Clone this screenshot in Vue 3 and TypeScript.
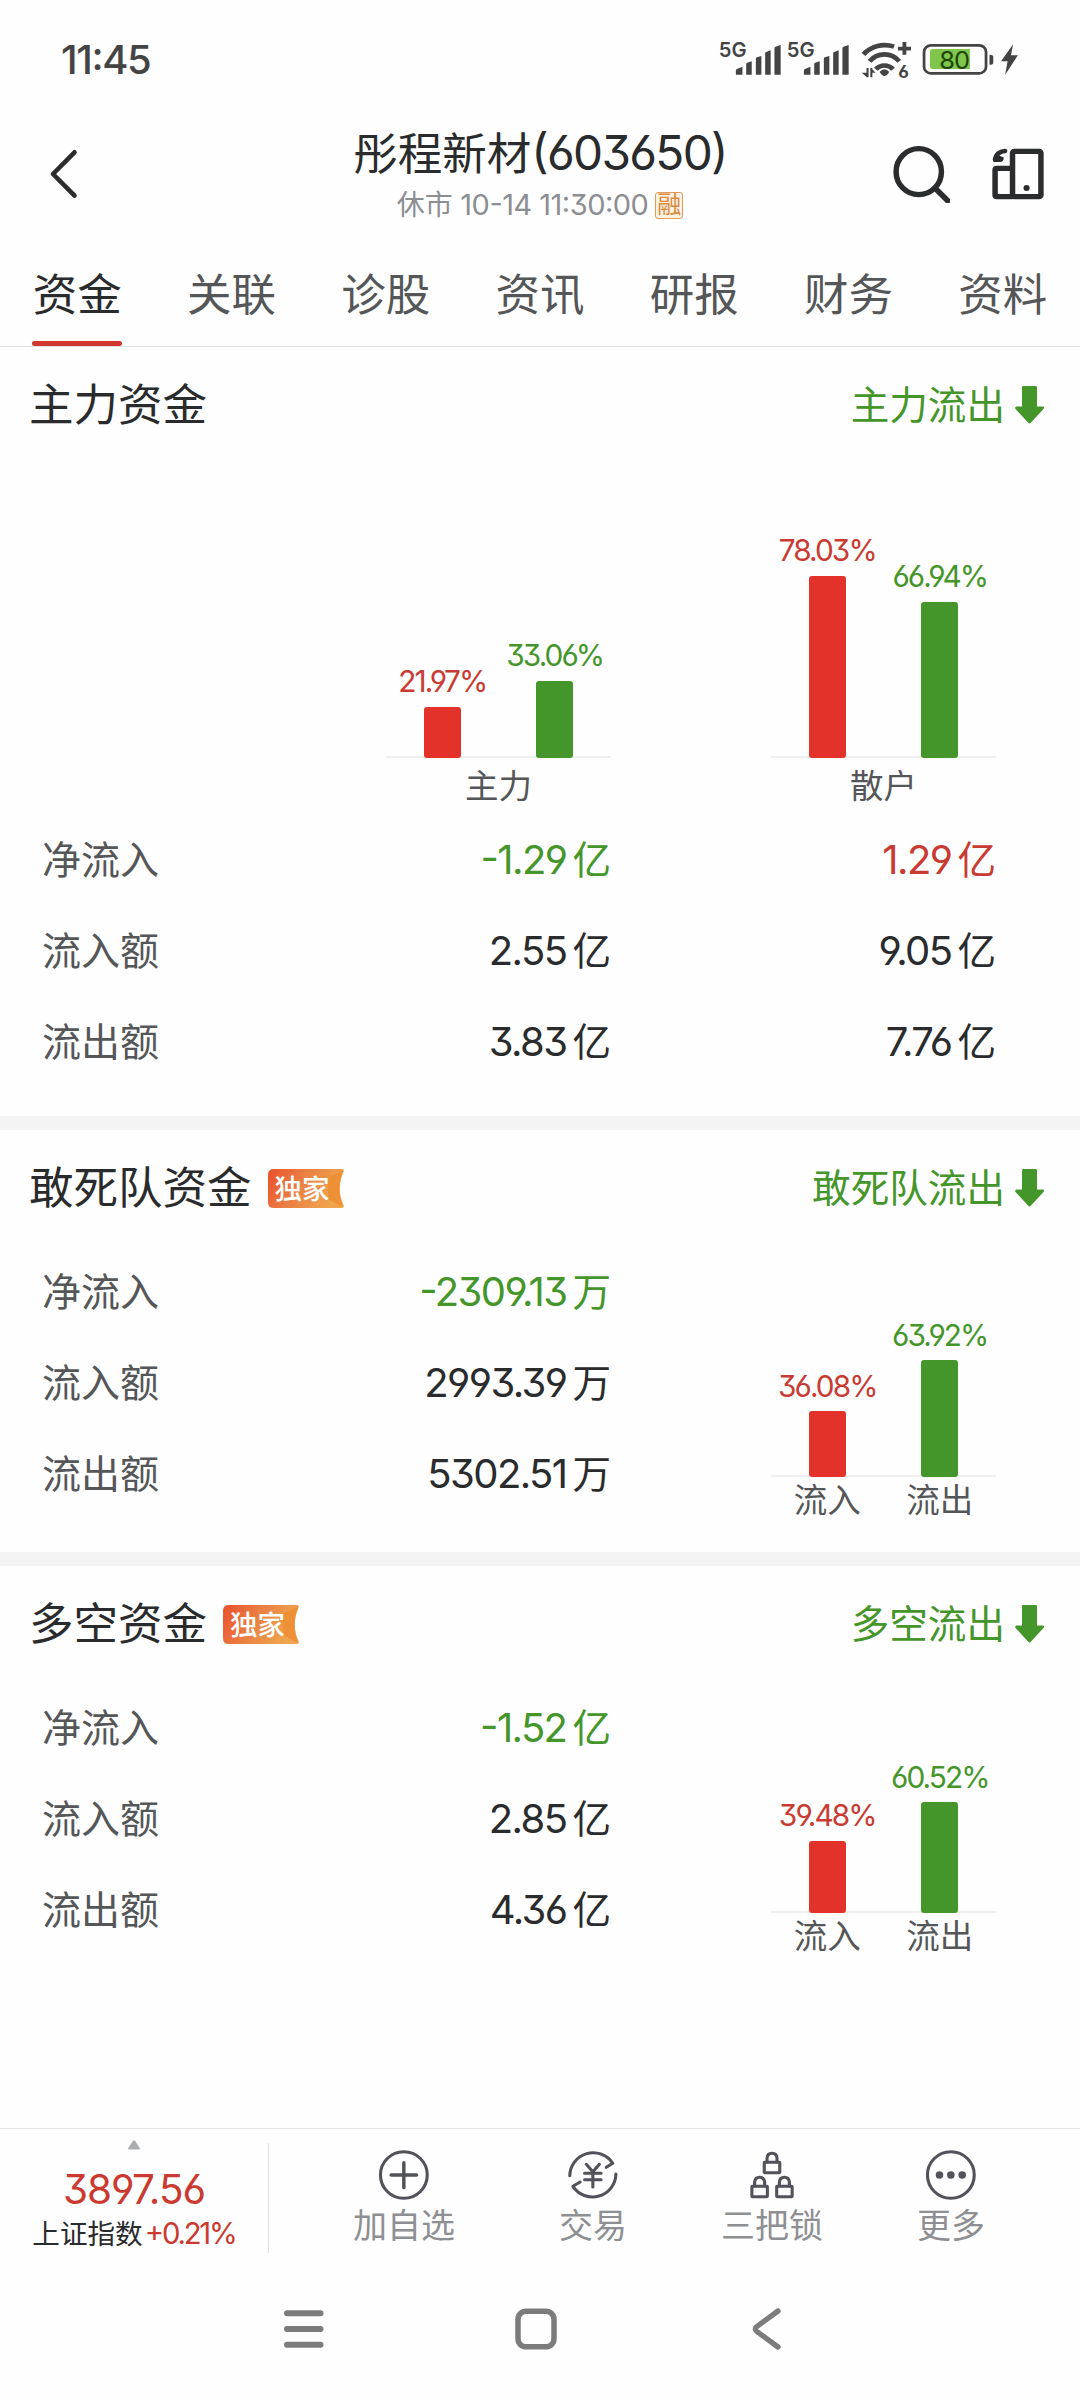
<script setup lang="ts">
interface Amount {
  num: string
  unit: string
  tone?: 'up' | 'down'
}
interface Row {
  label: string
  amounts: Amount[]
}
interface Bar {
  value: number
  tone: 'up' | 'down'
  label?: string
}

const tabs: string[] = ['资金', '关联', '诊股', '资讯', '研报', '财务', '资料']

const mainBars: { name: string; bars: Bar[] }[] = [
  { name: '主力', bars: [{ value: 21.97, tone: 'up' }, { value: 33.06, tone: 'down' }] },
  { name: '散户', bars: [{ value: 78.03, tone: 'up' }, { value: 66.94, tone: 'down' }] },
]

const mainRows: Row[] = [
  { label: '净流入', amounts: [{ num: '-1.29', unit: '亿', tone: 'down' }, { num: '1.29', unit: '亿', tone: 'up' }] },
  { label: '流入额', amounts: [{ num: '2.55', unit: '亿' }, { num: '9.05', unit: '亿' }] },
  { label: '流出额', amounts: [{ num: '3.83', unit: '亿' }, { num: '7.76', unit: '亿' }] },
]

const panels: { title: string; trend: string; rows: Row[]; bars: Bar[] }[] = [
  {
    title: '敢死队资金',
    trend: '敢死队流出',
    rows: [
      { label: '净流入', amounts: [{ num: '-2309.13', unit: '万', tone: 'down' }] },
      { label: '流入额', amounts: [{ num: '2993.39', unit: '万' }] },
      { label: '流出额', amounts: [{ num: '5302.51', unit: '万' }] },
    ],
    bars: [{ value: 36.08, tone: 'up', label: '流入' }, { value: 63.92, tone: 'down', label: '流出' }],
  },
  {
    title: '多空资金',
    trend: '多空流出',
    rows: [
      { label: '净流入', amounts: [{ num: '-1.52', unit: '亿', tone: 'down' }] },
      { label: '流入额', amounts: [{ num: '2.85', unit: '亿' }] },
      { label: '流出额', amounts: [{ num: '4.36', unit: '亿' }] },
    ],
    bars: [{ value: 39.48, tone: 'up', label: '流入' }, { value: 60.52, tone: 'down', label: '流出' }],
  },
]

const barHeight = (value: number, scale: number): string => `${(value * scale).toFixed(1)}px`
</script>

<template>
  <div class="screen">
    <div class="status">
      <span class="clock">11:45</span>
      <div class="status-icons">
        <svg v-for="n in 2" :key="n" class="signal" viewBox="0 0 180 116" preserveAspectRatio="none">
          <text x="-1" y="50" class="net" textLength="81" lengthAdjust="spacingAndGlyphs">5G</text>
          <path d="M49 104V92Q49 89 52 87L68 80V104ZM79 104V72Q79 69 82 68L95 64V104ZM107 104V56Q107 53 110 52L123 48V104ZM134 104V40Q134 37 137 36L150 31V104ZM161 104V24Q161 21 164 20L179 15V104Z" />
        </svg>
        <svg class="wifi" viewBox="0 0 148 116" preserveAspectRatio="none">
          <g fill="none" stroke="#444" stroke-width="14">
            <path d="M7 43A82 82 0 0 1 96 20" />
            <path d="M25 64A55 55 0 0 1 111 64" />
            <path d="M43 88A33 33 0 0 1 93 88" />
            <path d="M126 6V44M107 26H145" stroke-width="11" />
          </g>
          <path d="M54 95Q68 80 82 95Q68 121 54 95Z" />
          <path d="M16 84H22V112H17L2 98H16ZM27 84H33V112H27ZM33 88L42 98H33Z" />
          <text x="108" y="113" class="wifi-gen">6</text>
        </svg>
        <svg class="battery" viewBox="0 0 210 116" preserveAspectRatio="none">
          <rect x="6" y="16" width="180" height="84" rx="20" fill="none" stroke="#444" stroke-width="8" />
          <path d="M31 27H139V87H31Q23 87 23 79V35Q23 27 31 27Z" fill="#80c64c" />
          <path d="M196 44Q207 44 207 50V68Q207 74 196 74Z" />
          <text x="50" y="87" class="battery-level" textLength="90">80</text>
        </svg>
        <svg class="bolt" viewBox="0 0 54 116" preserveAspectRatio="none">
          <path d="M38 13L3 64H22L15 104L52 46H32Z" />
        </svg>
      </div>
    </div>

    <header class="header">
      <svg class="back" viewBox="0 0 30 52" fill="none" stroke="#2b2c2e" stroke-width="4.600" stroke-linecap="round" stroke-linejoin="round">
        <path d="M25.500 4.300L4 26L25.500 47.700" />
      </svg>
      <div class="heading">
        <div class="stock"><span class="stock-name">彤程新材</span><span>(603650)</span></div>
        <div class="session">
          <span><span class="session-cjk">休市</span> 10-14 11:30:00</span>
          <span class="margin-tag">融</span>
        </div>
      </div>
      <div class="header-actions">
        <svg class="search" viewBox="0 0 166 172" preserveAspectRatio="none" fill="none" stroke="#2b2c2e" stroke-width="16" stroke-linecap="round">
          <ellipse cx="75" cy="77" rx="66" ry="69" />
          <path d="M124 128L159 164" stroke-width="17" />
        </svg>
        <svg class="layout" viewBox="0 0 152 156" preserveAspectRatio="none" fill="none" stroke="#2b2c2e" stroke-width="16" stroke-linejoin="round">
          <rect x="60" y="10" width="83" height="136" rx="5" />
          <path d="M60 61H14Q9 61 9 66V141Q9 146 14 146H60" />
          <circle cx="101" cy="120" r="9" fill="#2b2c2e" stroke="none" />
          <path d="M38 9Q13 11 9 35" stroke-linecap="round" stroke-width="14" />
          <path d="M4 28L21 23L34 28Q36 42 22 42H7Q2 42 4 28Z" fill="#2b2c2e" stroke="none" />
        </svg>
      </div>
    </header>

    <nav class="tabs">
      <div v-for="(tab, i) in tabs" :key="tab" class="tab" :class="{ active: i === 0 }">
        <span>{{ tab }}</span>
      </div>
    </nav>

    <section class="main-panel">
      <div class="panel-head">
        <h2>主力资金</h2>
        <div class="trend">
          <span>主力流出</span>
          <svg viewBox="0 0 29 39" preserveAspectRatio="none"><path d="M8 0H20.500Q22 0 22 1.500V21H28Q30 21.500 28.500 23.500L16 37.500Q14.500 39.500 13 37.500L.5 23.500Q-.5 21.500 1.500 21H7V1.500Q7 0 8 0Z" /></svg>
        </div>
      </div>
      <div class="main-charts">
        <div v-for="group in mainBars" :key="group.name" class="chart">
          <div class="bars">
            <div v-for="bar in group.bars" :key="bar.tone" class="bar-col" :class="bar.tone">
              <span class="pct">{{ bar.value.toFixed(2) }}%</span>
              <i class="bar" :style="{ height: barHeight(bar.value, 2.335) }"></i>
            </div>
          </div>
          <div class="axis-name">{{ group.name }}</div>
        </div>
      </div>
      <div class="rows">
        <div v-for="row in mainRows" :key="row.label" class="row">
          <span class="row-label">{{ row.label }}</span>
          <span v-for="(a, i) in row.amounts" :key="i" class="amount" :class="a.tone">
            {{ a.num }}<em>{{ a.unit }}</em>
          </span>
        </div>
      </div>
    </section>

    <section v-for="panel in panels" :key="panel.title" class="panel">
      <div class="panel-head">
        <h2>{{ panel.title }}</h2>
        <div class="exclusive">
          <svg viewBox="0 0 76 40" preserveAspectRatio="none">
            <defs>
              <linearGradient id="ribbon" x1="0" y1="0" x2="1" y2=".3">
                <stop offset="0" stop-color="#e94f2d" />
                <stop offset=".5" stop-color="#ea8144" />
                <stop offset="1" stop-color="#efa54d" />
              </linearGradient>
            </defs>
            <path d="M6 0H74Q76.500 0 75.500 3Q68 20 75.500 37Q76.500 40 74 40H6Q0 40 0 34V6Q0 0 6 0Z" fill="url(#ribbon)" />
            <path d="M75 1L60 9V31L75 39Q68 20 75 1Z" fill="#ee9136" />
          </svg>
          <span>独家</span>
        </div>
        <div class="trend">
          <span>{{ panel.trend }}</span>
          <svg viewBox="0 0 29 39" preserveAspectRatio="none"><path d="M8 0H20.500Q22 0 22 1.500V21H28Q30 21.500 28.500 23.500L16 37.500Q14.500 39.500 13 37.500L.5 23.500Q-.5 21.500 1.500 21H7V1.500Q7 0 8 0Z" /></svg>
        </div>
      </div>
      <div class="panel-body">
        <div class="rows">
          <div v-for="row in panel.rows" :key="row.label" class="row">
            <span class="row-label">{{ row.label }}</span>
            <span v-for="(a, i) in row.amounts" :key="i" class="amount" :class="a.tone">
              {{ a.num }}<em>{{ a.unit }}</em>
            </span>
          </div>
        </div>
        <div class="chart">
          <div class="bars">
            <div v-for="bar in panel.bars" :key="bar.tone" class="bar-col" :class="bar.tone">
              <span class="pct">{{ bar.value.toFixed(2) }}%</span>
              <i class="bar" :style="{ height: barHeight(bar.value, 1.83) }"></i>
            </div>
          </div>
          <div class="axis-labels">
            <span v-for="bar in panel.bars" :key="bar.tone">{{ bar.label }}</span>
          </div>
        </div>
      </div>
    </section>

    <div class="filler"></div>

    <footer class="toolbar">
      <div class="index">
        <svg class="caret" viewBox="0 0 12 10"><path d="M5 .8Q6 -.5 7 .8L11.700 8Q12.200 9.500 11 9.500H1Q-.2 9.500 .3 8Z" fill="#aaacae" /></svg>
        <div class="index-value">3897.56</div>
        <div class="index-name"><span>上证指数</span><b>+0.21%</b></div>
      </div>
      <div class="actions">
        <div class="action">
          <svg viewBox="0 0 156 156" preserveAspectRatio="none">
            <ellipse cx="78" cy="78" rx="68" ry="70" />
            <path d="M78 41V116M41 78H115" stroke-width="10" />
          </svg>
          <span>加自选</span>
        </div>
        <div class="action">
          <svg viewBox="0 0 156 156" preserveAspectRatio="none">
            <path d="M11 80A68 70 0 0 1 136 43L117 55" />
            <path d="M145 75A68 70 0 0 1 20 112L41 99" />
            <path d="M59 46L78 68L97 46M78 68V114M54 73H102M54 92H102" />
          </svg>
          <span>交易</span>
        </div>
        <div class="action">
          <svg viewBox="0 0 156 156" preserveAspectRatio="none">
            <g v-for="p in [[51, 8], [15, 80], [87, 80]]" :key="p.join()" :transform="`translate(${p[0]} ${p[1]})`">
              <rect x="5" y="32" width="45" height="31" rx="1" />
              <path d="M13 31V20Q14 5 27.500 5T42 20V31" />
            </g>
          </svg>
          <span>三把锁</span>
        </div>
        <div class="action">
          <svg viewBox="0 0 156 156" preserveAspectRatio="none">
            <ellipse cx="78" cy="78" rx="68" ry="70" />
            <g fill="#52525a" stroke="none">
              <circle cx="45" cy="78" r="11" />
              <circle cx="78" cy="78" r="11" />
              <circle cx="111" cy="78" r="11" />
            </g>
          </svg>
          <span>更多</span>
        </div>
      </div>
    </footer>

    <div class="sysnav">
      <svg viewBox="0 0 44 46"><path d="M5 7.300H38.500M5 23H38.500M5 38.700H38.500" /></svg>
      <svg viewBox="0 0 44 46"><rect x="4" y="5.200" width="36" height="35.600" rx="8" stroke-width="5.500" /></svg>
      <svg viewBox="0 0 44 46"><path d="M32 5L10.700 20.700Q8 23 10.700 25.300L32 41" stroke-width="5.300" /></svg>
    </div>
  </div>
</template>

<style>
html,
body {
  background: #fefefe;
}
</style>

<style scoped>
.screen {
  width: 1080px;
  height: 2400px;
  display: flex;
  flex-direction: column;
  overflow: hidden;
  background: #fefefe;
  color: #2a2b2d;
  font-family: Inter, 'Noto Sans CJK SC', sans-serif;
  font-feature-settings: 'cv03', 'cv04', 'cv09', 'case', 'calt' 0;
}
svg {
  display: block;
  flex: none;
}
.status {
  height: 120px;
  flex: none;
  display: flex;
  justify-content: space-between;
  padding: 40px 61px 0 61px;
  box-sizing: border-box;
}
.clock {
  height: 40px;
  line-height: 40px;
  font-size: 40px;
  font-weight: 500;
  letter-spacing: -0.035em;
  color: #444;
}
.status-icons {
  display: flex;
}
.status-icons svg {
  height: 38.700px;
  fill: #444;
  overflow: visible;
}
.signal {
  width: 62px;
  margin-right: 6px;
}
.net {
  font-size: 62px;
  font-weight: 600;
}
.wifi {
  width: 51px;
  margin-left: 6px;
}
.wifi-gen {
  font-size: 50px;
  font-weight: 700;
}
.battery {
  width: 72.300px;
  margin-left: 10px;
}
.status-icons .battery-level {
  font-size: 74px;
  font-weight: 400;
  fill: #1d4508;
}
.bolt {
  width: 18.600px;
  margin-left: 6.500px;
}
.header {
  height: 126px;
  flex: none;
  display: flex;
  align-items: flex-start;
  justify-content: space-between;
}
.back {
  width: 30px;
  height: 52px;
  margin: 28px 171px 0 49px;
}
.heading {
  display: flex;
  flex-direction: column;
  align-items: center;
  flex: 1;
}
.stock {
  height: 60px;
  line-height: 60px;
  margin-top: 3px;
  font-size: 47.700px;
  letter-spacing: -0.035em;
  white-space: nowrap;
}
.stock-name {
  font-size: 44.500px;
  letter-spacing: 0;
}
.session {
  display: flex;
  align-items: center;
  height: 34px;
  line-height: 34px;
  margin-top: 5px;
  font-size: 29px;
  letter-spacing: -0.018em;
  color: #8c8e92;
  white-space: nowrap;
}
.session-cjk {
  font-size: 28px;
  letter-spacing: 0;
}
.margin-tag {
  width: 28px;
  height: 27px;
  box-sizing: border-box;
  margin-left: 7px;
  border: 1.500px solid #e19a55;
  border-radius: 3px;
  background: #fdf1e2;
  color: #d98a3f;
  font-size: 24px;
  line-height: 24px;
  display: flex;
  justify-content: center;
  letter-spacing: 0;
}
.header-actions {
  display: flex;
  width: 250px;
  justify-content: flex-end;
}
.search {
  width: 57px;
  height: 57.300px;
  margin: 25.700px 42px 0 0;
}
.layout {
  width: 52px;
  height: 52px;
  margin: 28px 36px 0 0;
}
.tabs {
  height: 101px;
  flex: none;
  display: flex;
  border-bottom: 1px solid #e4e4e4;
  box-sizing: border-box;
}
.tab {
  flex: 1;
  display: flex;
  flex-direction: column;
  align-items: center;
  justify-content: space-between;
  font-size: 44.500px;
  line-height: 99px;
  color: #555658;
}
.tab.active {
  color: #2a2b2d;
}
.tab span {
  height: 95px;
}
.tab.active::after {
  content: '';
  width: 90px;
  height: 5px;
  border-radius: 3px;
  background: #d0382f;
}
.panel-head {
  display: flex;
  align-items: center;
  height: 60px;
  padding: 0 36px 0 29px;
}
h2 {
  margin: 0;
  font-size: 44.500px;
  line-height: 60px;
  font-weight: 400;
}
.trend {
  display: flex;
  align-items: center;
  margin-left: auto;
  font-size: 38.600px;
  line-height: 60px;
  color: #45962a;
}
.trend svg {
  width: 29px;
  height: 38px;
  margin-left: 10px;
  fill: #45962a;
}
.exclusive {
  position: relative;
  width: 76px;
  height: 39px;
  margin-left: 16px;
}
.exclusive svg {
  width: 76px;
  height: 39px;
}
.exclusive span {
  position: absolute;
  left: 7px;
  top: 0;
  font-size: 27.500px;
  line-height: 40px;
  font-weight: 500;
  color: #fff;
}
.main-panel {
  height: 769px;
  flex: none;
  box-sizing: border-box;
  padding-top: 28px;
}
.main-charts {
  display: flex;
  gap: 160px;
  padding-left: 386px;
  margin-top: 23px;
}
.chart {
  width: 225px;
}
.bars {
  display: flex;
  align-items: flex-end;
  height: 300px;
  background: linear-gradient(#f0f0f1, #f0f0f1) 0 100% / 100% 2px no-repeat;
}
.bar-col {
  flex: 1;
  display: flex;
  flex-direction: column;
  align-items: center;
}
.pct {
  height: 30px;
  line-height: 30px;
  margin-bottom: 10.500px;
  font-size: 29.800px;
  letter-spacing: -0.065em;
  white-space: nowrap;
}
.up {
  color: #c93b32;
}
.down {
  color: #45962a;
}
.bar {
  width: 37px;
  border-radius: 3px;
  background: #e23229;
}
.down .bar {
  background: #45962a;
}
.axis-name {
  height: 42px;
  margin-top: 7px;
  font-size: 33.500px;
  line-height: 42px;
  text-align: center;
  color: #555658;
}
.rows {
  display: flex;
  flex-direction: column;
}
.main-panel .rows {
  margin-top: 7.500px;
}
.row {
  display: flex;
  align-items: center;
  height: 91px;
  padding-left: 42px;
}
.row-label {
  width: 169px;
  font-size: 39px;
  line-height: 60px;
  color: #555658;
}
.amount {
  width: 400px;
  text-align: right;
  font-size: 40px;
  line-height: 60px;
  letter-spacing: -0.04em;
}
.amount + .amount {
  width: 385px;
}
.amount em {
  margin-left: 6px;
  font-style: normal;
  font-size: 38.600px;
  letter-spacing: 0;
}
.panel {
  height: 436px;
  flex: none;
  box-sizing: border-box;
  border-top: 14px solid #f4f4f4;
  padding-top: 28px;
}
.panel-body {
  display: flex;
  padding-top: 28px;
}
.panel .chart {
  margin-left: 160px;
}
.panel .bars {
  height: 231px;
}
.axis-labels {
  display: flex;
  height: 42px;
  margin-top: 2px;
  font-size: 33.500px;
  line-height: 42px;
  color: #555658;
}
.axis-labels span {
  flex: 1;
  text-align: center;
}
.filler {
  flex: 1;
}
.toolbar {
  height: 149px;
  box-sizing: border-box;
  border-top: 1px solid #e2e2e2;
  display: flex;
  flex: none;
}
.index {
  width: 269px;
  height: 110px;
  box-sizing: border-box;
  margin-top: 14px;
  border-right: 1px solid #e2e2e2;
  display: flex;
  flex-direction: column;
  align-items: center;
  flex: none;
}
.caret {
  width: 12px;
  height: 10px;
  margin-top: -3px;
}
.index-value {
  height: 50px;
  margin-top: 15px;
  line-height: 50px;
  font-size: 40.500px;
  letter-spacing: -0.025em;
  color: #ca3a31;
}
.index-name {
  display: flex;
  align-items: center;
  height: 34px;
  margin-top: 2px;
  line-height: 34px;
  font-size: 27.600px;
}
.index-name b {
  margin-left: 2px;
  font-size: 29.300px;
  font-weight: 400;
  letter-spacing: -0.075em;
  color: #ca3a31;
}
.actions {
  display: grid;
  grid-template-columns: 180px 198px 160px 198px;
  margin-left: 45px;
}
.action {
  display: flex;
  flex-direction: column;
  align-items: center;
}
.action svg {
  width: 53.700px;
  height: 52px;
  margin-top: 20px;
  fill: none;
  stroke: #52525a;
  stroke-width: 9;
  stroke-linecap: round;
  stroke-linejoin: round;
}
.action span {
  height: 44px;
  margin-top: 3px;
  font-size: 34px;
  line-height: 44px;
  color: #8e8f92;
}
.sysnav {
  height: 123px;
  flex: none;
  display: flex;
  align-items: flex-start;
  justify-content: center;
  gap: 188px;
  padding-right: 9px;
}
.sysnav svg {
  width: 44px;
  height: 46px;
  margin-top: 29px;
  fill: none;
  stroke: #7c7c7c;
  stroke-width: 6;
  stroke-linecap: round;
  stroke-linejoin: round;
}
</style>
